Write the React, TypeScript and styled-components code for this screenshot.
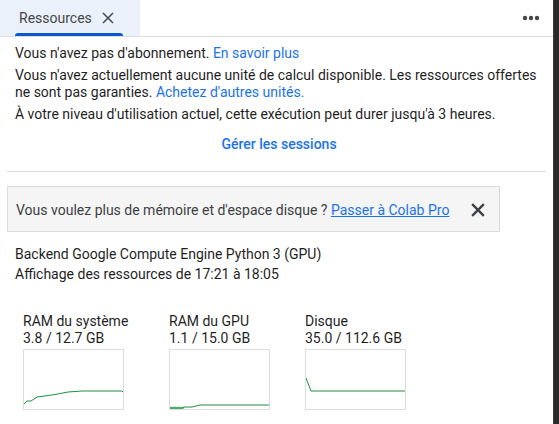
import styled, { createGlobalStyle } from "styled-components";

const GlobalStyle = createGlobalStyle`
  html, body {
    margin: 0;
    padding: 0;
    background: #ffffff;
  }
  body {
    font-family: Roboto, "Liberation Sans", Arial, sans-serif;
    color: #1f1f1f;
  }
`;

const Page = styled.div`
  display: flex;
  width: 559px;
  height: 424px;
  overflow: hidden;
`;

const Panel = styled.div`
  width: 554px;
  display: flex;
  flex-direction: column;
`;

const Edge = styled.div`
  width: 5px;
  background: #2a2a2a;
  border-left: 1px solid #3c3c3c;
`;

const TabBar = styled.div`
  height: 36px;
  display: flex;
  align-items: stretch;
  justify-content: space-between;
  border-bottom: 1px solid #dadce0;
`;

const Tab = styled.div`
  width: 140px;
  background: #eaf1fb;
  display: flex;
  align-items: center;
  padding-left: 19px;
  box-sizing: border-box;
  position: relative;
  font-size: 14px;
  color: #444746;

  &::after {
    content: "";
    position: absolute;
    left: 15px;
    width: 108px;
    bottom: 0;
    height: 3px;
    border-radius: 3px 3px 0 0;
    background: #0b57d0;
  }
`;

const TabClose = styled.span`
  display: flex;
  margin-left: 10px;
`;

const MoreButton = styled.div`
  width: 40px;
  display: flex;
  align-items: center;
  justify-content: center;
  margin-right: 2px;
`;

const Info = styled.div`
  padding: 8px 15px 0;
  font-size: 14px;
  line-height: 17px;
`;

const Para = styled.p`
  margin: 0 0 5px;
`;

const Link = styled.a<{ $underline?: boolean }>`
  color: #1a73e8;
  text-decoration: ${(p) => (p.$underline ? "underline" : "none")};
  cursor: pointer;
`;

const Manage = styled.div`
  text-align: center;
  font-size: 14px;
  font-weight: 500;
  color: #1a73e8;
  padding: 8px 0 18px;
  line-height: 17px;
  padding-left: 5px;
`;

const Divider = styled.hr`
  border: none;
  border-top: 1px solid #dadce0;
  margin: 0 7px;
`;

const Banner = styled.div`
  margin: 14px 0 0 7px;
  width: 493px;
  height: 46px;
  box-sizing: border-box;
  background: #f5f5f5;
  border: 1px solid #dadce0;
  display: flex;
  align-items: center;
  justify-content: space-between;
  padding: 1px 14px 0 8px;
  font-size: 14px;
  color: #3c4043;
`;

const Backend = styled.div`
  padding: 12px 15px 0;
  font-size: 14px;
  line-height: 20px;
`;

const Charts = styled.div`
  display: grid;
  grid-template-columns: 146px 136px auto;
  padding: 29px 0 0 23px;
`;

const ChartCol = styled.div`
  font-size: 14px;
  line-height: 17px;
  color: #1f1f1f;
`;

const ChartBox = styled.div`
  width: 101px;
  height: 61px;
  box-sizing: border-box;
  border: 1px solid #dadce0;
  margin-top: 2px;
`;

const dotsSvg = (
  <svg width="18" height="6" viewBox="0 0 18 6">
    <circle cx="3" cy="3" r="2.2" fill="#444746" />
    <circle cx="9" cy="3" r="2.2" fill="#444746" />
    <circle cx="15" cy="3" r="2.2" fill="#444746" />
  </svg>
);

function CloseIcon({ size, color, width }: { size: number; color: string; width: number }) {
  return (
    <svg width={size} height={size} viewBox="0 0 12 12">
      <path d="M1 1L11 11M11 1L1 11" stroke={color} strokeWidth={width} fill="none" />
    </svg>
  );
}

function Spark({ points, thick }: { points: string; thick?: string }) {
  return (
    <svg width="99" height="59" viewBox="0 0 99 59">
      {thick && <polyline points={thick} fill="none" stroke="#81c995" strokeWidth="2.5" />}
      <polyline points={points} fill="none" stroke="#1e8e3e" strokeWidth="1" />
    </svg>
  );
}

const charts = [
  {
    label: "RAM du système",
    value: "3.8 / 12.7 GB",
    points: "0,54 3,51 7,51 13,47 21,46 34,44 44,42 58,41 98,41 99,42",
  },
  {
    label: "RAM du GPU",
    value: "1.1 / 15.0 GB",
    points: "0,58 12,58 15,57 22,57 30,55 99,55",
    thick: "0,58 14,58",
  },
  {
    label: "Disque",
    value: "35.0 / 112.6 GB",
    points: "0,28 5,41 99,41",
  },
];

export default function App() {
  return (
    <Page>
      <GlobalStyle />
      <Panel>
        <TabBar>
          <Tab>
            Ressources
            <TabClose>
              <CloseIcon size={12} color="#444746" width={1.5} />
            </TabClose>
          </Tab>
          <MoreButton>{dotsSvg}</MoreButton>
        </TabBar>
        <Info>
          <Para>
            Vous n'avez pas d'abonnement. <Link>En savoir plus</Link>
          </Para>
          <Para>
            Vous n'avez actuellement aucune unité de calcul disponible. Les ressources offertes
            ne sont pas garanties. <Link>Achetez d'autres unités.</Link>
          </Para>
          <Para>À votre niveau d'utilisation actuel, cette exécution peut durer jusqu'à 3 heures.</Para>
        </Info>
        <Manage>Gérer les sessions</Manage>
        <Divider />
        <Banner>
          <span>
            Vous voulez plus de mémoire et d'espace disque ? <Link $underline>Passer à Colab Pro</Link>
          </span>
          <CloseIcon size={14} color="#3c4043" width={2} />
        </Banner>
        <Backend>
          <div>Backend Google Compute Engine Python 3 (GPU)</div>
          <div>Affichage des ressources de 17:21 à 18:05</div>
        </Backend>
        <Charts>
          {charts.map((c) => (
            <ChartCol key={c.label}>
              <div>{c.label}</div>
              <div>{c.value}</div>
              <ChartBox>
                <Spark points={c.points} thick={c.thick} />
              </ChartBox>
            </ChartCol>
          ))}
        </Charts>
      </Panel>
      <Edge />
    </Page>
  );
}
